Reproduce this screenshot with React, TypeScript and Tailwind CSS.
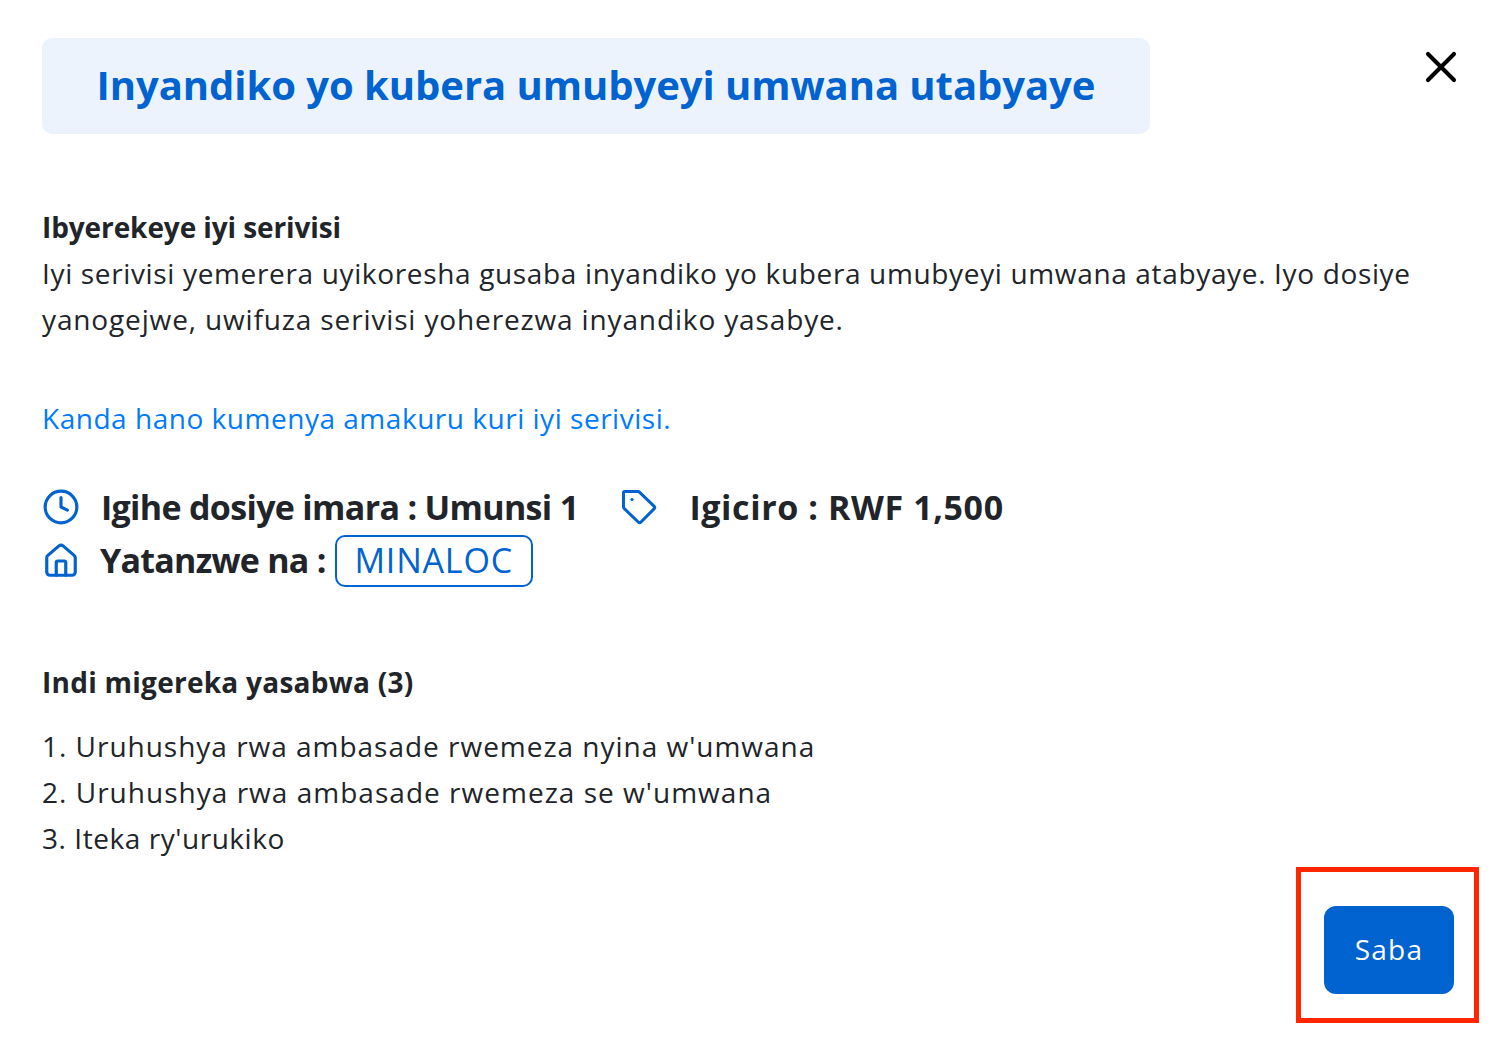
import { Clock, Home, X } from "lucide-react";

const requirements = [
  { text: "Uruhushya rwa ambasade rwemeza nyina w'umwana", tracking: "tracking-[0.98px]" },
  { text: "Uruhushya rwa ambasade rwemeza se w'umwana", tracking: "tracking-[1.02px]" },
  { text: "Iteka ry'urukiko", tracking: "tracking-[0.55px]" },
];

function TagIcon() {
  return (
    <svg width="36" height="36" viewBox="0 0 36 36" fill="none" className="ml-[43px] shrink-0">
      <path
        d="M2.5 3.5a1 1 0 0 1 1-1H17a2 2 0 0 1 1.4.6l14.6 14a2 2 0 0 1 0 2.8L20 33a2 2 0 0 1-2.8 0L3.1 19.4a2 2 0 0 1-.6-1.4Z"
        stroke="#0063cf"
        strokeWidth="3"
        strokeLinejoin="round"
      />
      <circle cx="11" cy="10.5" r="1.6" fill="#0063cf" />
    </svg>
  );
}

export default function App() {
  return (
    <div className="relative w-[1496px] h-[1048px] bg-white overflow-hidden font-['Open_Sans',sans-serif] text-[#212529] text-[28px] leading-[46px]">
      <div className="pl-[42px] pr-[38px] pt-[38px]">
        <div className="flex items-start justify-between">
          <div className="w-[1108px] h-[96px] pb-[3px] rounded-[10px] bg-[#ecf3fd] flex items-center justify-center">
            <h1 className="text-[40px] leading-[48px] font-bold text-[#0063cf] tracking-[-0.05px] whitespace-nowrap">
              Inyandiko yo kubera umubyeyi umwana utabyaye
            </h1>
          </div>
          <button className="mt-[3px] -mr-[9px] shrink-0 text-black">
            <X size={52} strokeWidth={1.9} strokeLinecap="round" />
          </button>
        </div>

        <div className="mt-[70px]">
          <p className="font-bold tracking-[-0.1px]">Ibyerekeye iyi serivisi</p>
          <p className="whitespace-nowrap tracking-[0.65px]">
            Iyi serivisi yemerera uyikoresha gusaba inyandiko yo kubera umubyeyi umwana atabyaye. Iyo dosiye
          </p>
          <p className="whitespace-nowrap tracking-[0.86px]">
            yanogejwe, uwifuza serivisi yoherezwa inyandiko yasabye.
          </p>
        </div>

        <a className="block mt-[53px] text-[#007bff] tracking-[0.52px]">Kanda hano kumenya amakuru kuri iyi serivisi.</a>

        <div className="mt-[39px] flex items-center h-[54px] font-bold text-[34px]">
          <Clock size={38} strokeWidth={2} className="text-[#0063cf] shrink-0" />
          <span className="ml-[21px] tracking-[-0.68px]">Igihe dosiye imara : Umunsi 1</span>
          <TagIcon />
          <span className="ml-[32px] tracking-[0.6px]">Igiciro : RWF 1,500</span>
        </div>
        <div className="mt-[1px] flex items-center h-[52px] font-bold text-[34px]">
          <Home size={38} strokeWidth={2} className="text-[#0063cf] shrink-0" />
          <span className="ml-[20px] pb-[2px] tracking-[-0.75px]">Yatanzwe na :</span>
          <span className="ml-[9px] w-[198px] h-[52px] pb-[2px] rounded-[10px] border-2 border-[#0063cf] flex items-center justify-center font-normal text-[#0063cf] tracking-[0.8px]">
            MINALOC
          </span>
        </div>

        <p className="mt-[72px] font-bold tracking-[0.26px]">Indi migereka yasabwa (3)</p>
        <ol className="mt-[18px]">
          {requirements.map((item, i) => (
            <li key={item.text} className={item.tracking}>
              {i + 1}. {item.text}
            </li>
          ))}
        </ol>

        <div className="flex justify-end mt-[45px] pr-[4px]">
          <button className="w-[130px] h-[88px] pb-[2px] rounded-[12px] bg-[#0063cf] text-white tracking-[1.2px]">Saba</button>
        </div>
      </div>

      <div className="absolute left-[1296px] top-[867px] w-[183px] h-[156px] border-[5px] border-[#ff2600]" />
    </div>
  );
}
